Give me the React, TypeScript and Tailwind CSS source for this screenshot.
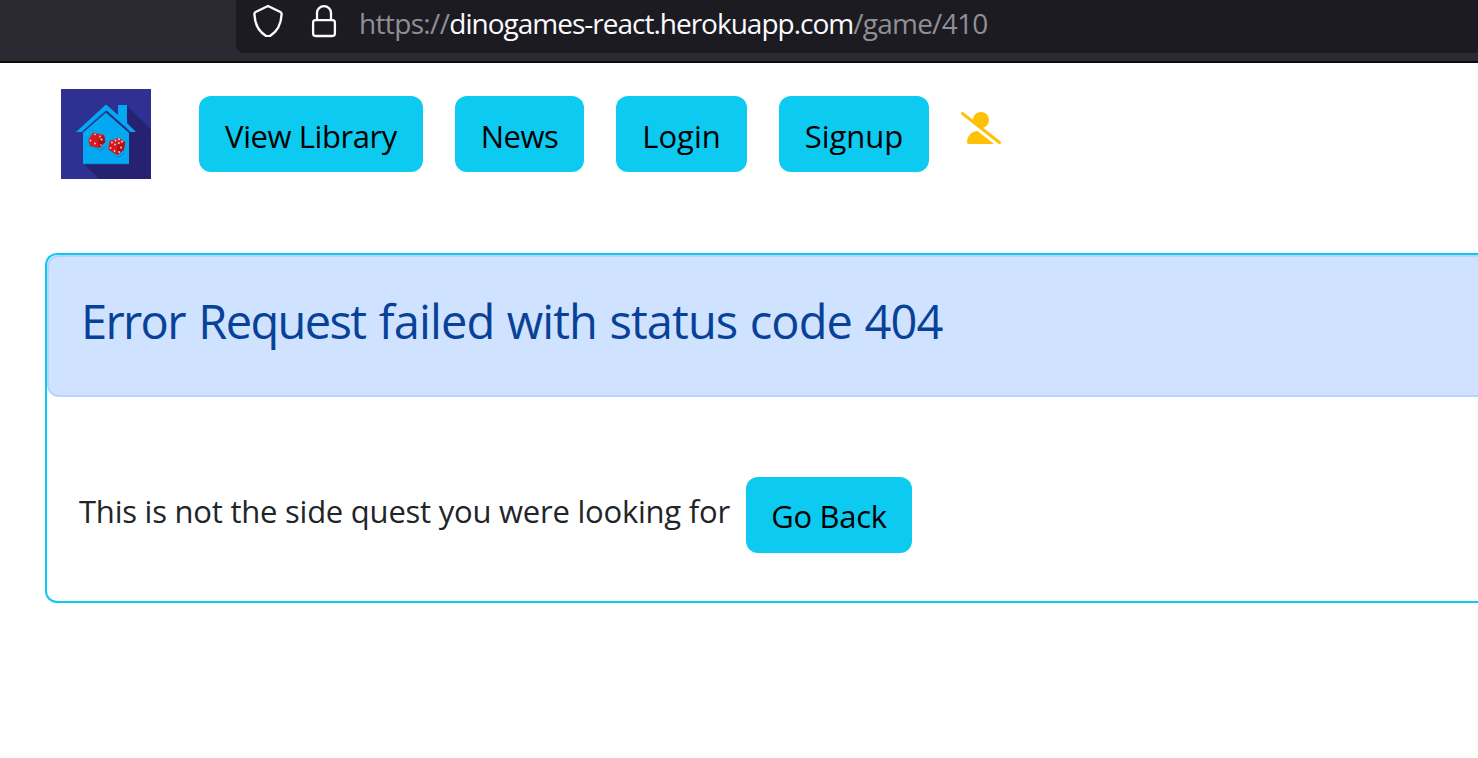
import type { ReactNode } from "react";
import { FaUserSlash } from "react-icons/fa6";

function Shield() {
  return (
    <svg className="h-[34px] w-8 shrink-0" viewBox="0 0 32 34" fill="none" stroke="#fbfbfe" strokeWidth="2.4" strokeLinejoin="round">
      <path d="M16 3 L28.4 9 Q29.7 9.700 29.6 11.200 C29.2 20.8 25.6 28.2 18 32.9 Q16 34 14 32.9 C6.4 28.2 2.8 20.8 2.4 11.200 Q2.3 9.700 3.6 9 Z" />
    </svg>
  );
}

function Lock() {
  return (
    <svg className="h-[34px] w-6.5 shrink-0" viewBox="0 0 26 34" fill="none" stroke="#fbfbfe" strokeWidth="2.3">
      <rect x="2.1" y="16.1" width="21.8" height="15.9" rx="2.4" />
      <path d="M6 16 V9 a7 6.8 0 0 1 14 0 V16" />
    </svg>
  );
}

function Logo() {
  return (
    <svg className="h-[90px] w-[90px] shrink-0" viewBox="0 0 90 90">
      <rect width="90" height="90" fill="#2e3192" />
      <path d="M66 17 L90 40 V90 H38 L22 74 Z" fill="#262170" />
      <path d="M45 15.500 L57 26 V16 H66 V34 L75 43 H68 L45 22.500 L22 43 H15 Z" fill="#04a8f2" />
      <path d="M45 23.500 L68 43.500 V75 H22 V43.500 Z" fill="#04a8f2" />
      <path d="M45 22.300 L68.500 43" stroke="#24307f" strokeWidth="1.9" />
      <path d="M45 22.300 L21.500 43" stroke="#24409a" strokeWidth="1.6" />
      <path d="M22.500 75 H68" stroke="#1a6fb8" strokeWidth=".6" />
      <path d="M30 57 L39 61 L45 56 L46 58 L39.500 62.500 Z M50 64 L56 68 L64 63 L64 65 L56.500 69 Z" fill="#1878b8" opacity=".6" />
      <path d="M32 43.500 L43 46 L44.300 53 L38.500 59 L29 57 L27.300 51 Z" fill="#d21a1f" />
      <path d="M37.500 51 L43 46 L44.300 53 L38.500 59 Z" fill="#a80f16" />
      <path d="M48.500 52 L58 48.700 L64.300 53 L62.800 61 L56 66 L47.200 60.500 Z" fill="#d21a1f" />
      <path d="M56 57 L64.300 53 L62.800 61 L56 66 Z" fill="#b01018" />
      <g fill="#ffe0e0" opacity=".9">
        <circle cx="34" cy="45.300" r=".9" /><circle cx="39" cy="47.500" r=".9" /><circle cx="29.500" cy="51.500" r=".9" />
        <circle cx="34" cy="54.500" r=".9" /><circle cx="40.500" cy="50.500" r="1.100" /><circle cx="40" cy="56" r=".8" />
        <circle cx="51" cy="53.500" r="1" /><circle cx="54.500" cy="51.500" r="1" /><circle cx="58" cy="50.300" r="1" />
        <circle cx="54" cy="55.500" r=".9" /><circle cx="57.800" cy="54" r="1" /><circle cx="61" cy="52.500" r="1" />
        <circle cx="49.500" cy="59" r=".9" /><circle cx="53.500" cy="62" r=".9" /><circle cx="58" cy="63" r=".9" /><circle cx="60" cy="58.500" r="1" />
      </g>
    </svg>
  );
}

function Button({ className, children }: { className: string; children: ReactNode }) {
  return (
    <button className={"h-19 shrink-0 rounded-xl bg-[#0dcaf0] text-[31px] leading-[44px] whitespace-nowrap text-black " + className}>
      {children}
    </button>
  );
}

export default function App() {
  return (
    <div className="h-[758px] w-full overflow-hidden bg-white font-['Open_Sans','Noto_Sans',sans-serif]">
      <header className="h-[63px] border-b-2 border-[#0c0c0d] bg-[#2b2a33] pl-[236px]">
        <div className="flex h-[53px] items-start rounded-bl-lg bg-[#1c1b22] pl-4">
          <div className="pt-[3px]"><Shield /></div>
          <div className="ml-[27px] pt-1"><Lock /></div>
          <p className="ml-[22px] pt-1 text-[28px] leading-[38px] whitespace-nowrap text-[#8f8f95]">
            <span className="tracking-[-0.65px]">https://</span>
            <span className="tracking-[-1px] text-[#fbfbfe]">dinogames-react.herokuapp.com</span>
            <span className="tracking-[-0.75px]">/game/410</span>
          </p>
        </div>
      </header>
      <nav className="flex h-[190px] items-start pt-[26px] pl-[61px]">
        <Logo />
        <div className="ml-12 flex gap-8 pt-[7px]">
          <Button className="w-[224px] pt-1 tracking-[-0.42px]">View Library</Button>
          <Button className="w-[129px] pt-1 tracking-[-0.5px]">News</Button>
          <Button className="w-[131px] pt-1">Login</Button>
          <Button className="w-[150px] pt-1">Signup</Button>
          <FaUserSlash className="mt-4 h-8 w-10 text-[#ffc107]" />
        </div>
      </nav>
      <main className="ml-[45px] h-[350px] rounded-l-xl border-2 border-r-0 border-[#0dcaf0]">
        <div className="h-[142px] rounded-l-xl border-2 border-r-0 border-[#b6d4fe] bg-[#cfe2ff] pt-8 pl-8">
          <h1 className="text-[47px] leading-[64px] whitespace-nowrap text-[#084298]">
            <span className="tracking-[-1.65px] [word-spacing:3px]">Error Request </span>
            <span className="tracking-[-0.88px] [word-spacing:1px]">failed with status code 404</span>
          </h1>
        </div>
        <div className="flex pt-20 pl-8">
          <p className="w-[667px] pt-3 text-[31px] leading-[44px] tracking-[-0.23px] whitespace-nowrap text-[#212529]">This is not the side quest you were looking for</p>
          <Button className="w-[166px] pt-0.5 tracking-[-0.3px]">Go Back</Button>
        </div>
      </main>
    </div>
  );
}
